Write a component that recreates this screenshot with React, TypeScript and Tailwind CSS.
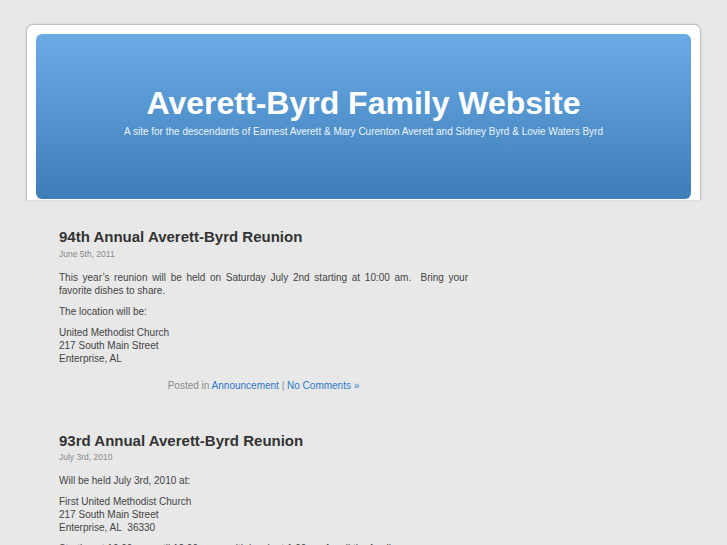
export default function App() {
  return (
    <div className="min-h-screen bg-[#e8e8e8] font-['Liberation_Sans',Arial,sans-serif] text-[#444]">
      <div className="mx-auto w-[675px] pt-[24px]">
        <div className="rounded-t-[7px] border border-b-0 border-[#c2c2c2] bg-white px-[9px] pt-[9px] pb-[1px] shadow-[0_0_2px_rgba(0,0,0,0.15)]">
          <div className="h-[165px] rounded-[6px] bg-gradient-to-b from-[#6aabe6] to-[#3d7db8] pt-[51px] text-center text-white">
            <h1 className="text-[32px] font-bold leading-[36px]">Averett-Byrd Family Website</h1>
            <p className="mt-[4px] text-[10px] leading-[14px] text-[#eef4fb]">
              A site for the descendants of Earnest Averett &amp; Mary Curenton Averett and Sidney Byrd &amp; Lovie Waters Byrd
            </p>
          </div>
        </div>

        <main className="w-[442px] pl-[33px] pt-[27px]">
          <article>
            <h2 className="text-[15px] font-bold leading-[20px] text-[#333]">94th Annual Averett-Byrd Reunion</h2>
            <div className="mt-[1px] text-[8.5px] leading-[12px] text-[#888]">June 5th, 2011</div>
            <div className="mt-[11px] text-[10px] leading-[13px]">
              <p className="mb-[8px] text-justify">
                This year’s reunion will be held on Saturday July 2nd starting at 10:00 am.{'\u00a0'} Bring your favorite dishes to share.
              </p>
              <p className="mb-[8px]">The location will be:</p>
              <p className="mb-[8px]">
                United Methodist Church
                <br />
                217 South Main Street
                <br />
                Enterprise, AL
              </p>
            </div>
            <div className="mt-[14px] text-center text-[10px] leading-[13px] text-[#888]">
              Posted in <a className="text-[#2a78c8]" href="#">Announcement</a> | <a className="text-[#2a78c8]" href="#">No Comments »</a>
            </div>
          </article>

          <article className="mt-[39px]">
            <h2 className="text-[15px] font-bold leading-[20px] text-[#333]">93rd Annual Averett-Byrd Reunion</h2>
            <div className="text-[8.5px] leading-[12px] text-[#888]">July 3rd, 2010</div>
            <div className="mt-[11px] text-[10px] leading-[13px]">
              <p className="mb-[8px]">Will be held July 3rd, 2010 at:</p>
              <p className="mb-[8px]">
                First United Methodist Church
                <br />
                217 South Main Street
                <br />
                Enterprise, AL{'\u00a0'} 36330
              </p>
              <p className="mb-[8px]">Starting at 10:00 am until 12:00 noon, with lunch at 1:00 pm for all the family.</p>
            </div>
          </article>
        </main>
      </div>
    </div>
  )
}
